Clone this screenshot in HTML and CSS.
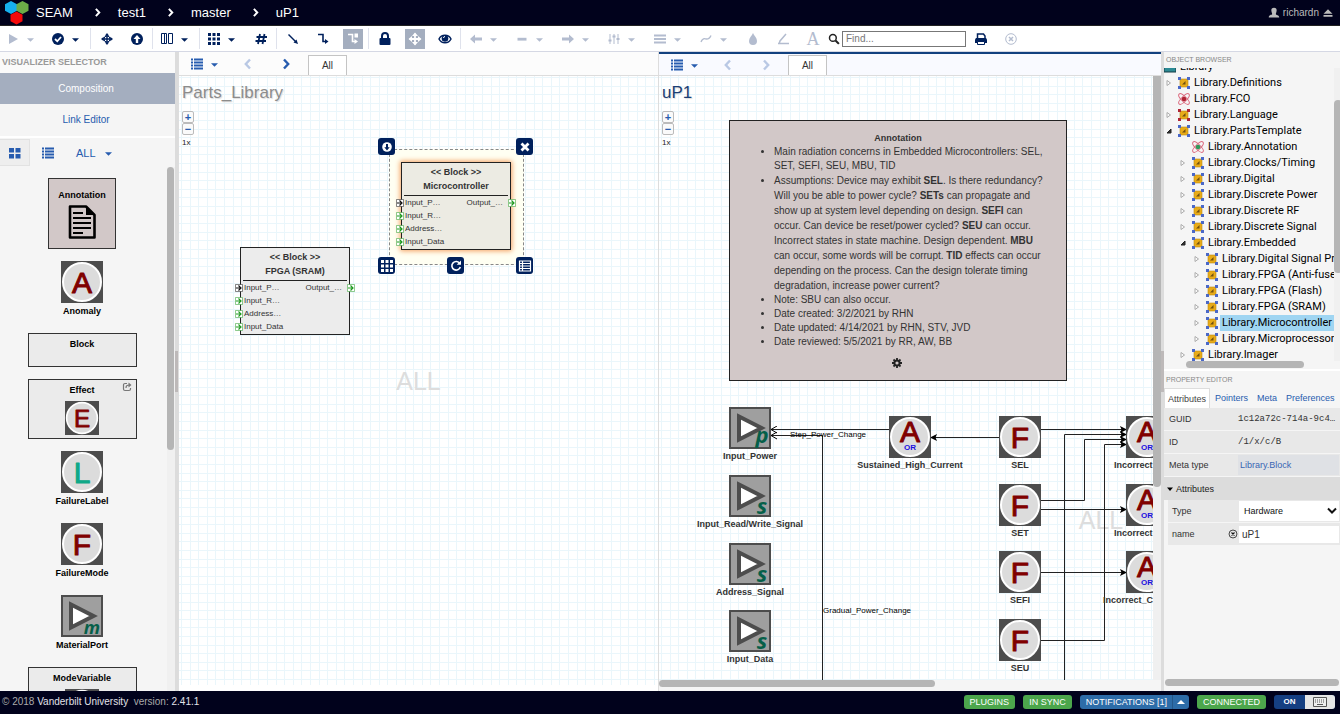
FILE: index.html
```html
<!DOCTYPE html>
<html lang="en">
<head>
<meta charset="utf-8">
<title>SEAM</title>
<link rel="stylesheet" href="styles.css">
</head>
<body>
<svg class="defs" aria-hidden="true">
  <symbol id="caret" viewBox="0 0 8 16"><path d="M0 7h8l-4 4z" fill="currentColor"/></symbol>
  <symbol id="play" viewBox="0 0 16 16"><path d="M4 3l9 5-9 5z" fill="currentColor"/></symbol>
  <symbol id="check" viewBox="0 0 16 16"><circle cx="8" cy="8" r="6" fill="currentColor"/><path d="M5 8l2.3 2.3L11 6" fill="none" stroke="#fff" stroke-width="1.8"/></symbol>
  <symbol id="target" viewBox="0 0 16 16"><path d="M8 2l2.200 2.800H8.700v2.500h2.500V5.800L14 8l-2.800 2.200V8.700H8.700v2.500h1.500L8 14l-2.200-2.800h1.500V8.700H4.800v1.500L2 8l2.800-2.200v1.500h2.500V4.800H5.800z" fill="currentColor"/><circle cx="8" cy="8" r="3" fill="none" stroke="currentColor"/></symbol>
  <symbol id="up" viewBox="0 0 16 16"><circle cx="8" cy="8" r="6" fill="currentColor"/><path d="M8 4l3.500 4H9.200v4H6.800V8H4.500z" fill="#fff"/></symbol>
  <symbol id="columns" viewBox="0 0 16 16"><path d="M2.500 2.500h5v10h-5zM9.500 2.500h4v10h-4zM5.500 2.500v10" fill="none" stroke="currentColor"/></symbol>
  <symbol id="grid" viewBox="0 0 16 16"><path d="M2 2h3v3H2zM6.500 2h3v3h-3zM11 2h3v3h-3zM2 6.500h3v3H2zM6.500 6.500h3v3h-3zM11 6.500h3v3h-3zM2 11h3v3H2zM6.500 11h3v3h-3zM11 11h3v3h-3z" fill="currentColor"/></symbol>
  <symbol id="hash" viewBox="0 0 16 16"><path d="M7 3L5 13M11.500 3l-2 10M3.500 6H14M2.500 10H13" fill="none" stroke="currentColor" stroke-width="1.800"/></symbol>
  <symbol id="diag" viewBox="0 0 16 16"><path d="M3.500 3.500l7 7" stroke="currentColor" stroke-width="1.400"/><path d="M13 13L8.500 11.500l3-3z" fill="currentColor"/></symbol>
  <symbol id="step" viewBox="0 0 16 16"><path d="M3 3.500h5v7h3" fill="none" stroke="currentColor" stroke-width="1.600"/><path d="M13.500 10.500L10 8v5z" fill="currentColor"/></symbol>
  <symbol id="stepbox" viewBox="0 0 16 16"><path d="M3 3.500h4.500v7H11" fill="none" stroke="currentColor" stroke-width="1.600"/><path d="M13 10.500L9.500 8v5zM9.500 2.500H13v4H9.500z" fill="currentColor"/></symbol>
  <symbol id="lock" viewBox="0 0 16 16"><rect x="2.500" y="7" width="11" height="7" rx="1" fill="currentColor"/><path d="M5 8V5a3 3 0 016 0v3" fill="none" stroke="currentColor" stroke-width="2"/></symbol>
  <symbol id="move" viewBox="0 0 16 16"><path d="M8 2.500v11M2.500 8h11" stroke="currentColor" stroke-width="1.800"/><path d="M8 1.500L11 5H5zM8 14.500L11 11H5zM1.500 8L5 5v6zM14.500 8L11 5v6z" fill="currentColor"/></symbol>
  <symbol id="eye" viewBox="0 0 16 16"><path d="M2 8c2.500-5 9.500-5 12 0-2.500 5-9.500 5-12 0z" fill="none" stroke="currentColor" stroke-width="1.500"/><circle cx="8" cy="7.500" r="3.300" fill="currentColor"/><path d="M6.500 7a1.500 1.500 0 011.500-1.500" fill="none" stroke="#fff"/></symbol>
  <symbol id="left" viewBox="0 0 16 16"><path d="M2 8l5-4.500v3h7v3H7v3z" fill="currentColor"/></symbol>
  <symbol id="right" viewBox="0 0 16 16"><path d="M14 8L9 3.500v3H2v3h7v3z" fill="currentColor"/></symbol>
  <symbol id="minus" viewBox="0 0 16 16"><path d="M3.500 6.800h9v2.800h-9z" fill="currentColor"/></symbol>
  <symbol id="sliders" viewBox="0 0 16 16"><path d="M4 3v10M8 3v10M12 3v10" stroke="currentColor"/><path d="M2.500 9.500h3M6.500 5.500h3M10.500 8h3" stroke="currentColor" stroke-width="2"/></symbol>
  <symbol id="lines" viewBox="0 0 16 16"><path d="M2 4.500h12M2 8h12M2 11.500h12" stroke="currentColor" stroke-width="1.800"/></symbol>
  <symbol id="curve" viewBox="0 0 16 16"><path d="M3 11c2-5 4-3 5.500-3S12 7 13 4.500" fill="none" stroke="currentColor" stroke-width="1.300"/></symbol>
  <symbol id="drop" viewBox="0 0 16 16"><path d="M8 2c1 2.500 4 5 4 8a4 4 0 01-8 0c0-3 3-5.500 4-8z" fill="currentColor"/></symbol>
  <symbol id="pen" viewBox="0 0 16 16"><path d="M11 3l-6 7-1 3M3 12.500h11" fill="none" stroke="currentColor" stroke-width="1.500"/></symbol>
  <symbol id="search" viewBox="0 0 16 16"><circle cx="6.500" cy="6.500" r="4.500" fill="none" stroke="currentColor" stroke-width="2"/><path d="M10 10l4.500 4.500" stroke="currentColor" stroke-width="2.800"/></symbol>
  <symbol id="print" viewBox="0 0 16 16"><path d="M4.500 8V3h6l1.500 2v3" fill="none" stroke="currentColor" stroke-width="1.500"/><path d="M2 8.500L3 7h10l1 1.500V12H2z" fill="currentColor"/><path d="M4.500 10.500h7v3h-7z" fill="#fff" stroke="currentColor"/></symbol>
  <symbol id="xcircle" viewBox="0 0 16 16"><circle cx="8" cy="8" r="5.300" fill="none" stroke="currentColor"/><path d="M6 6l4 4M10 6l-4 4" stroke="currentColor" stroke-width="1.500"/></symbol>
  <symbol id="list" viewBox="0 0 16 16"><path d="M2 3.500h2M5 3.500h9M2 6.500h2M5 6.500h9M2 9.500h2M5 9.500h9M2 12.500h2M5 12.500h9" stroke="currentColor" stroke-width="2"/></symbol>
  <symbol id="tiles" viewBox="0 0 16 16"><path d="M2 3h5v4.500H2zM8.500 3h5v4.500h-5zM2 9h5v4.500H2zM8.500 9h5v4.500h-5z" fill="currentColor"/></symbol>
  <symbol id="chevl" viewBox="0 0 16 16"><path d="M10 3.500L5.800 8l4.200 4.500" fill="none" stroke="currentColor" stroke-width="2.400"/></symbol>
  <symbol id="chevr" viewBox="0 0 16 16"><path d="M6 3.500L10.200 8 6 12.500" fill="none" stroke="currentColor" stroke-width="2.400"/></symbol>
  <symbol id="user" viewBox="0 0 16 16"><path d="M8 1c3 0 3.700 1.700 3.500 4C11.300 7.300 10.500 8 10.500 9.500c0 1 4.500 1 4.500 4.500H1c0-3.500 4.500-3.500 4.500-4.500C5.500 8 4.700 7.300 4.500 5 4.300 2.700 5 1 8 1z" fill="currentColor"/></symbol>
  <symbol id="eject" viewBox="0 0 16 16"><path d="M8 3l6 6H2zM2 10.500h12v2.500H2z" fill="currentColor"/></symbol>
  <symbol id="down" viewBox="0 0 16 16"><circle cx="8" cy="8" r="4.800" fill="#fff"/><path d="M8 11.500L5.300 8.300H7V5h2v3.300h1.700z" fill="#00205c"/></symbol>
  <symbol id="times" viewBox="0 0 16 16"><path d="M4.500 4.500l7 7M11.500 4.500l-7 7" stroke="currentColor" stroke-width="2.800"/></symbol>
  <symbol id="rotate" viewBox="0 0 16 16"><path d="M11.800 5.500A4.300 4.300 0 1012.300 9" fill="none" stroke="currentColor" stroke-width="1.600"/><path d="M13 2.500v4.300H8.700z" fill="currentColor"/></symbol>
  <symbol id="table" viewBox="0 0 16 16"><path d="M2.500 3h11v10h-11zM2.500 5.500h11M2.500 8h11M2.500 10.500h11M5.500 3v10" fill="none" stroke="currentColor" stroke-width="1.200"/></symbol>
  <symbol id="port" viewBox="0 0 8 8"><path d="M.5.5h7v7h-7z" fill="#fff" stroke="currentColor" stroke-opacity=".5"/><path d="M1 4h5M3.500 1.500L6 4 3.500 6.500" fill="none" stroke="currentColor" stroke-width="1.200"/></symbol>
  <symbol id="disc" viewBox="0 0 42 42"><path d="M0 0h42v42H0z" fill="#4d4d4d"/><circle cx="21" cy="21" r="19" fill="#dcdcdc" stroke="#fff" stroke-width="2"/></symbol>
  <symbol id="n-a" viewBox="0 0 42 42"><use href="#disc"/><text class="glyph red" x="21" y="32">A</text></symbol>
  <symbol id="n-f" viewBox="0 0 42 42"><use href="#disc"/><text class="glyph red" x="21" y="32">F</text></symbol>
  <symbol id="n-e" viewBox="0 0 42 42"><use href="#disc"/><text class="glyph red" x="21" y="32">E</text></symbol>
  <symbol id="n-l" viewBox="0 0 42 42"><use href="#disc"/><text class="glyph teal" x="21" y="32">L</text></symbol>
  <symbol id="n-or" viewBox="0 0 42 42"><use href="#disc"/><text class="glyph red" x="21" y="26">A</text><text class="or" x="21" y="34">OR</text></symbol>
  <symbol id="tri" viewBox="0 0 42 42"><path d="M1 1h40v40H1z" fill="#9f9f9f" stroke="#4d4d4d" stroke-width="2"/><path d="M10 9.500v23L32.500 21z" fill="#fff" stroke="#4d4d4d" stroke-width="4"/></symbol>
  <symbol id="n-p" viewBox="0 0 42 42"><use href="#tri"/><text class="kind" x="33" y="36">p</text></symbol>
  <symbol id="n-s" viewBox="0 0 42 42"><use href="#tri"/><text class="kind" x="33" y="39">s</text></symbol>
  <symbol id="n-m" viewBox="0 0 42 42"><use href="#tri"/><text class="kind m" x="31" y="39">m</text></symbol>
  <symbol id="doc" viewBox="0 0 28 34"><path d="M2 1.500h16L26.500 10v22.500H2z" fill="none" stroke="#000" stroke-width="2.600" stroke-linejoin="round"/><path d="M18 1v9h9z"/><path d="M5 8h10M5 13h18M5 18h18M5 23h18M5 28h10" stroke="#000" stroke-width="2.200"/></symbol>
  <symbol id="share" viewBox="0 0 10 10"><path d="M5 1.500H3A1.500 1.500 0 001.500 3v4A1.500 1.500 0 003 8.500h4A1.500 1.500 0 008.500 7V6M4 6c0-2 1-3 3.500-3" fill="none" stroke="#777" stroke-width="1.200"/><path d="M6.500.5L9.500 3l-3 2.500z" fill="#777"/></symbol>
  <symbol id="gear" viewBox="0 0 10 10"><circle cx="5" cy="5" r="2.600" fill="none" stroke="#222" stroke-width="2"/><path d="M5 0v2M5 8v2M0 5h2M8 5h2M1.500 1.500l1.300 1.300M7.200 7.200l1.300 1.300M8.500 1.500L7.200 2.800M2.800 7.200L1.500 8.500" stroke="#222" stroke-width="1.800"/></symbol>
  <symbol id="model" viewBox="0 0 12 12"><path d="M2 2l8 8M10 2l-8 8" stroke="#666"/><path d="M2 2h8v8H2z" fill="#e8ab18" stroke="#b98a1a" stroke-width=".6"/><path d="M4 7.500L7.500 4v3.500z" fill="#705010"/><path d="M0 0h3v3H0zM9 0h3v3H9zM0 9h3v3H0zM9 9h3v3H9z" fill="currentColor"/></symbol>
  <symbol id="atom" viewBox="0 0 12 12"><g fill="none" stroke="#dc6c80"><ellipse cx="6" cy="6" rx="7" ry="2.500" transform="rotate(45 6 6)"/><ellipse cx="6" cy="6" rx="7" ry="2.500" transform="rotate(-45 6 6)"/></g><circle cx="6" cy="6" r="2.300" fill="currentColor"/></symbol>
  <symbol id="twist" viewBox="0 0 8 8"><path d="M2 1.500L5.500 4 2 6.500z" fill="#fff" stroke="#aaa"/></symbol>
  <symbol id="open" viewBox="0 0 8 8"><path d="M6 2v4H2z" fill="#333" stroke="#222"/></symbol>
  <symbol id="keys" viewBox="0 0 14 10"><path d="M.5.5h13v9H.5z" fill="#eee" stroke="#555"/><path d="M2 3h10M2 5h10" stroke="#555" stroke-dasharray="1 1"/><path d="M4 7.500h6" stroke="#555"/></symbol>
</svg>

<header class="topbar">
  <svg class="logo" viewBox="0 0 26 24"><path d="M10 0l6 3.200v6.600L10 13 4 9.800V3.200z" fill="#16b0f0"/><path d="M21.500 0l6 3.200v6.600l-6 3.200-6-3.200V3.200z" fill="#6cac48"/><path d="M15.500 10.500l6 3.200v6.600l-6 3.200-6-3.200v-6.600z" fill="#f50a0a"/></svg>
  <nav class="crumbs"><a href="#">SEAM</a><svg class="ic sep"><use href="#chevr"/></svg><a href="#">test1</a><svg class="ic sep"><use href="#chevr"/></svg><a href="#">master</a><svg class="ic sep"><use href="#chevr"/></svg><a href="#">uP1</a></nav>
  <a class="user" href="#"><svg class="ic12"><use href="#user"/></svg>richardn<svg class="ic12"><use href="#eject"/></svg></a>
</header>

<div class="toolbar">
  <button class="split off" aria-label="Run"><svg class="ic"><use href="#play"/></svg><svg class="car"><use href="#caret"/></svg></button>
  <button class="split" aria-label="Validate"><svg class="ic"><use href="#check"/></svg><svg class="car"><use href="#caret"/></svg></button>
  <i class="bar"></i>
  <button class="tool" aria-label="Center"><svg class="ic"><use href="#target"/></svg></button>
  <button class="tool" aria-label="Up"><svg class="ic"><use href="#up"/></svg></button>
  <i class="bar"></i>
  <button class="split" aria-label="Panels"><svg class="ic"><use href="#columns"/></svg><svg class="car"><use href="#caret"/></svg></button>
  <i class="bar"></i>
  <button class="split" aria-label="Arrange"><svg class="ic"><use href="#grid"/></svg><svg class="car"><use href="#caret"/></svg></button>
  <button class="tool" aria-label="Grid"><svg class="ic"><use href="#hash"/></svg></button>
  <i class="bar"></i>
  <button class="tool" aria-label="Straight"><svg class="ic"><use href="#diag"/></svg></button>
  <button class="tool" aria-label="Elbow"><svg class="ic"><use href="#step"/></svg></button>
  <button class="tool" aria-label="Avoid"><svg class="ic on"><use href="#stepbox"/></svg></button>
  <i class="bar"></i>
  <button class="tool" aria-label="Lock"><svg class="ic"><use href="#lock"/></svg></button>
  <button class="tool" aria-label="Move"><svg class="ic on"><use href="#move"/></svg></button>
  <button class="tool" aria-label="View"><svg class="ic"><use href="#eye"/></svg></button>
  <i class="bar"></i>
  <button class="split line off" aria-label="Line start"><svg class="ic"><use href="#left"/></svg><svg class="car"><use href="#caret"/></svg></button>
  <button class="split line off" aria-label="Pattern"><svg class="ic"><use href="#minus"/></svg><svg class="car"><use href="#caret"/></svg></button>
  <button class="split line off" aria-label="Line end"><svg class="ic"><use href="#right"/></svg><svg class="car"><use href="#caret"/></svg></button>
  <button class="split line off" aria-label="Adjust"><svg class="ic"><use href="#sliders"/></svg><svg class="car"><use href="#caret"/></svg></button>
  <button class="split line off" aria-label="Width"><svg class="ic"><use href="#lines"/></svg><svg class="car"><use href="#caret"/></svg></button>
  <button class="split line off" aria-label="Curve"><svg class="ic"><use href="#curve"/></svg><svg class="car"><use href="#caret"/></svg></button>
  <button class="tool off" aria-label="Fill"><svg class="ic"><use href="#drop"/></svg></button>
  <button class="tool off" aria-label="Border"><svg class="ic"><use href="#pen"/></svg></button>
  <button class="tool off serif">A</button>
  <label class="find"><svg class="ic12"><use href="#search"/></svg><input type="text" placeholder="Find..." aria-label="Find"></label>
  <button class="tool" aria-label="Print"><svg class="ic"><use href="#print"/></svg></button>
  <button class="tool off" aria-label="Clear"><svg class="ic"><use href="#xcircle"/></svg></button>
</div>

<main class="main">
  <aside class="side">
    <h2 class="side-title">VISUALIZER SELECTOR</h2>
    <button class="vis active">Composition</button>
    <button class="vis">Link Editor</button>
    <div class="filter">
      <button class="view picked" aria-label="Tiles"><svg class="ic"><use href="#tiles"/></svg></button>
      <button class="view" aria-label="List"><svg class="ic"><use href="#list"/></svg></button>
      <button class="all">ALL<svg class="car"><use href="#caret"/></svg></button>
    </div>
    <div class="palette">
      <div class="parts">
        <div class="part note"><span>Annotation</span><svg class="docicon"><use href="#doc"/></svg></div>
        <div class="part"><svg class="big"><use href="#n-a"/></svg><span>Anomaly</span></div>
        <div class="part box">Block</div>
        <div class="part box tall">Effect<svg class="share"><use href="#share"/></svg><svg class="mid"><use href="#n-e"/></svg></div>
        <div class="part"><svg class="big"><use href="#n-l"/></svg><span>FailureLabel</span></div>
        <div class="part"><svg class="big"><use href="#n-f"/></svg><span>FailureMode</span></div>
        <div class="part"><svg class="big"><use href="#n-m"/></svg><span>MaterialPort</span></div>
        <div class="part box tall">ModeVariable<svg class="mid"><use href="#disc"/></svg></div>
      </div>
      <div class="track"><div class="thumb palette-thumb"></div></div>
    </div>
  </aside>
  <div class="gutter"><div class="grip"></div></div>

  <section class="pane first">
    <div class="tabs">
      <button class="menu" aria-label="Views"><svg class="ic"><use href="#list"/></svg><svg class="car"><use href="#caret"/></svg></button>
      <button class="nav dim" aria-label="Back"><svg class="ic"><use href="#chevl"/></svg></button>
      <button class="nav" aria-label="Forward"><svg class="ic"><use href="#chevr"/></svg></button>
      <button class="tab">All</button>
    </div>
    <div class="canvas">
      <h1 class="name">Parts_Library</h1>
      <div class="zoom"><button>+</button><button>−</button><span>1x</span></div>
      <div class="mark mark-a">ALL</div>
      <div class="block fpga">
        <b>&lt;&lt; Block &gt;&gt;</b><b>FPGA (SRAM)</b><hr>
        <div class="row"><svg class="pt blk"><use href="#port"/></svg>Input_P…<span class="out">Output_…</span><svg class="pt"><use href="#port"/></svg></div>
        <div class="row"><svg class="pt"><use href="#port"/></svg>Input_R…</div>
        <div class="row"><svg class="pt"><use href="#port"/></svg>Address…</div>
        <div class="row"><svg class="pt"><use href="#port"/></svg>Input_Data</div>
      </div>
      <div class="selection">
        <div class="block micro">
          <b>&lt;&lt; Block &gt;&gt;</b><b>Microcontroller</b><hr>
          <div class="row"><svg class="pt blk"><use href="#port"/></svg>Input_P…<span class="out">Output_…</span><svg class="pt"><use href="#port"/></svg></div>
          <div class="row"><svg class="pt"><use href="#port"/></svg>Input_R…</div>
          <div class="row"><svg class="pt"><use href="#port"/></svg>Address…</div>
          <div class="row"><svg class="pt"><use href="#port"/></svg>Input_Data</div>
        </div>
        <button class="handle nw" aria-label="Open"><svg class="ic"><use href="#down"/></svg></button>
        <button class="handle ne" aria-label="Delete"><svg class="ic"><use href="#times"/></svg></button>
        <button class="handle sw" aria-label="Ports"><svg class="ic"><use href="#grid"/></svg></button>
        <button class="handle s" aria-label="Rotate"><svg class="ic"><use href="#rotate"/></svg></button>
        <button class="handle se" aria-label="Properties"><svg class="ic"><use href="#table"/></svg></button>
      </div>
    </div>
  </section>

  <section class="pane second">
    <div class="tabs">
      <button class="menu" aria-label="Views"><svg class="ic"><use href="#list"/></svg><svg class="car"><use href="#caret"/></svg></button>
      <button class="nav dim" aria-label="Back"><svg class="ic"><use href="#chevl"/></svg></button>
      <button class="nav dim" aria-label="Forward"><svg class="ic"><use href="#chevr"/></svg></button>
      <button class="tab">All</button>
    </div>
    <div class="scroller">
      <div class="canvas">
        <h1 class="name blue">uP1</h1>
        <div class="zoom"><button>+</button><button>−</button><span>1x</span></div>
        <div class="mark mark-b">ALL</div>
        <svg class="wires">
          <defs>
            <marker id="head" markerWidth="8" markerHeight="8" refX="6" refY="4" orient="auto" markerUnits="userSpaceOnUse"><path d="M0 0.500L7 4 0 7.500 1.500 4z"/></marker>
            <marker id="vee" markerWidth="8" markerHeight="8" refX="7" refY="4" orient="auto" markerUnits="userSpaceOnUse"><path d="M1 .5L7 4 1 7.500" fill="none" stroke="#000"/></marker>
          </defs>
          <g class="wire">
            <path marker-end="url(#vee)" d="M230 353.500H112"/>
            <path marker-end="url(#vee)" d="M163.500 604V359.500H112"/>
            <path marker-end="url(#head)" d="M340 361.500H272"/>
            <path marker-end="url(#head)" d="M382 353.500H467"/>
            <path marker-end="url(#head)" d="M405.500 604V358.500H467"/>
            <path marker-end="url(#head)" d="M382 424.500H425.500V363.500H467"/>
            <path marker-end="url(#head)" d="M382 433.500H467"/>
            <path marker-end="url(#head)" d="M382 496.500H467"/>
            <path marker-end="url(#head)" d="M382 564.500H445.500V368.500H467"/>
          </g>
          <text x="131" y="361">Step_Power_Change</text>
          <text x="164" y="537">Gradual_Power_Change</text>
        </svg>
        <div class="annotation">
          <b>Annotation</b>
          <ul>
            <li>Main radiation concerns in Embedded Microcontrollers: SEL, SET, SEFI, SEU, MBU, TID</li>
            <li class="long">Assumptions: Device may exhibit <b>SEL</b>. Is there redundancy? Will you be able to power cycle? <b>SETs</b> can propagate and show up at system level depending on design. <b>SEFI</b> can occur. Can device be reset/power cycled? <b>SEU</b> can occur. Incorrect states in state machine. Design dependent. <b>MBU</b> can occur, some words will be corrupt. <b>TID</b> effects can occur depending on the process. Can the design tolerate timing degradation, increase power current?</li>
            <li>Note: SBU can also occur.</li>
            <li>Date created: 3/2/2021 by RHN</li>
            <li>Date updated: 4/14/2021 by RHN, STV, JVD</li>
            <li>Date reviewed: 5/5/2021 by RR, AW, BB</li>
          </ul>
          <svg class="gear"><use href="#gear"/></svg>
        </div>
        <div class="node c1 r1"><svg class="big"><use href="#n-p"/></svg>Input_Power</div>
        <div class="node c1 r2"><svg class="big"><use href="#n-s"/></svg>Input_Read/Write_Signal</div>
        <div class="node c1 r3"><svg class="big"><use href="#n-s"/></svg>Address_Signal</div>
        <div class="node c1 r4"><svg class="big"><use href="#n-s"/></svg>Input_Data</div>
        <div class="node c2 q1"><svg class="big"><use href="#n-or"/></svg>Sustained_High_Current</div>
        <div class="node c3 q1"><svg class="big"><use href="#n-f"/></svg>SEL</div>
        <div class="node c3 q2"><svg class="big"><use href="#n-f"/></svg>SET</div>
        <div class="node c3 q3"><svg class="big"><use href="#n-f"/></svg>SEFI</div>
        <div class="node c3 q4"><svg class="big"><use href="#n-f"/></svg>SEU</div>
        <div class="node c4 q1"><svg class="big"><use href="#n-or"/></svg><span class="cut">Incorrect</span></div>
        <div class="node c4 q2"><svg class="big"><use href="#n-or"/></svg><span class="cut">Incorrect</span></div>
        <div class="node c4 q3"><svg class="big"><use href="#n-or"/></svg><span class="cut wide">Incorrect_C</span></div>
      </div>
      <div class="track"><div class="thumb canvas-vthumb"></div></div>
      <div class="track across"><div class="thumb canvas-hthumb"></div></div>
    </div>
  </section>
  <div class="gutter"><div class="grip"></div></div>

  <aside class="props">
    <h2 class="mini">OBJECT BROWSER</h2>
    <div class="browser">
      <ul class="tree">
        <li class="root"><svg class="folder" viewBox="0 0 12 12"><path d="M0 2h12v9H0z" fill="#2d8a94" stroke="#143c44"/></svg><span>Library</span></li>
        <li><svg class="tw"><use href="#twist"/></svg><svg class="kindi"><use href="#model"/></svg><span>Library.Definitions</span></li>
        <li><i class="tw"></i><svg class="kindi crimson"><use href="#atom"/></svg><span>Library.FCO</span></li>
        <li><svg class="tw"><use href="#twist"/></svg><svg class="kindi crimson"><use href="#model"/></svg><span>Library.Language</span></li>
        <li><svg class="tw"><use href="#open"/></svg><svg class="kindi"><use href="#model"/></svg><span>Library.PartsTemplate</span></li>
        <li class="l2"><i class="tw"></i><svg class="kindi green"><use href="#atom"/></svg><span>Library.Annotation</span></li>
        <li class="l2"><svg class="tw"><use href="#twist"/></svg><svg class="kindi"><use href="#model"/></svg><span>Library.Clocks/Timing</span></li>
        <li class="l2"><svg class="tw"><use href="#twist"/></svg><svg class="kindi"><use href="#model"/></svg><span>Library.Digital</span></li>
        <li class="l2"><svg class="tw"><use href="#twist"/></svg><svg class="kindi"><use href="#model"/></svg><span>Library.Discrete Power</span></li>
        <li class="l2"><svg class="tw"><use href="#twist"/></svg><svg class="kindi"><use href="#model"/></svg><span>Library.Discrete RF</span></li>
        <li class="l2"><svg class="tw"><use href="#twist"/></svg><svg class="kindi"><use href="#model"/></svg><span>Library.Discrete Signal</span></li>
        <li class="l2"><svg class="tw"><use href="#open"/></svg><svg class="kindi"><use href="#model"/></svg><span>Library.Embedded</span></li>
        <li class="l3"><svg class="tw"><use href="#twist"/></svg><svg class="kindi"><use href="#model"/></svg><span>Library.Digital Signal Pr</span></li>
        <li class="l3"><svg class="tw"><use href="#twist"/></svg><svg class="kindi"><use href="#model"/></svg><span>Library.FPGA (Anti-fuse</span></li>
        <li class="l3"><svg class="tw"><use href="#twist"/></svg><svg class="kindi"><use href="#model"/></svg><span>Library.FPGA (Flash)</span></li>
        <li class="l3"><svg class="tw"><use href="#twist"/></svg><svg class="kindi"><use href="#model"/></svg><span>Library.FPGA (SRAM)</span></li>
        <li class="l3"><svg class="tw"><use href="#twist"/></svg><svg class="kindi"><use href="#model"/></svg><span class="chosen">Library.Microcontroller</span></li>
        <li class="l3"><svg class="tw"><use href="#twist"/></svg><svg class="kindi"><use href="#model"/></svg><span>Library.Microprocessor</span></li>
        <li class="l2"><svg class="tw"><use href="#twist"/></svg><svg class="kindi"><use href="#model"/></svg><span>Library.Imager</span></li>
      </ul>
      <div class="track"><div class="thumb tree-vthumb"></div></div>
      <div class="track across"><div class="thumb tree-hthumb"></div></div>
    </div>
    <h2 class="mini editor">PROPERTY EDITOR</h2>
    <div class="ptabs"><button class="current">Attributes</button><button>Pointers</button><button>Meta</button><button>Preferences</button></div>
    <div class="prow"><span>GUID</span><span class="mono">1c12a72c-714a-9c4…</span></div>
    <div class="prow"><span>ID</span><span class="mono">/1/x/c/B</span></div>
    <div class="prow"><span>Meta type</span><a class="meta" href="#">Library.Block</a></div>
    <div class="pgroup"><svg class="fold" viewBox="0 0 6 6"><path d="M0 1.500h6l-3 3.500z"/></svg>Attributes</div>
    <div class="prow inset"><label for="type">Type</label><div class="picker"><select id="type"><option>Hardware</option></select><svg viewBox="0 0 10 8"><path d="M1 1.500l4 4 4-4" fill="none" stroke="#111" stroke-width="2"/></svg></div></div>
    <div class="prow inset"><label for="nm">name <svg class="reset"><use href="#xcircle"/></svg></label><input id="nm" type="text" value="uP1"></div>
    <div class="track across bottom"><div class="thumb"></div></div>
  </aside>
</main>

<footer class="foot">
  <span>© 2018 <b>Vanderbilt University</b>&nbsp; version: <b>2.41.1</b></span>
  <div class="status">
    <button class="pill">PLUGINS</button>
    <button class="pill">IN SYNC</button>
    <button class="pill notif"><span>NOTIFICATIONS [1]</span><svg class="upc" viewBox="0 0 8 8"><path d="M0 6h8L4 2z" fill="#fff"/></svg></button>
    <button class="pill">CONNECTED</button>
    <button class="switch"><span>ON</span><svg class="keys"><use href="#keys"/></svg></button>
  </div>
</footer>
</body>
</html>
```
FILE: styles.css
```css
* { box-sizing: border-box; }
body {
  margin: 0; height: 100vh; overflow: hidden;
  display: grid; grid-template-rows: 26px 26px minmax(0, 1fr) 23px;
  font: 10px/14px "Liberation Sans", Arial, sans-serif; color: #333; background: #fff;
}
button, input, select { font: inherit; color: inherit; margin: 0; padding: 0; border: 0; background: none; }
a { color: inherit; text-decoration: none; }
h1, h2, ul { margin: 0; padding: 0; font-weight: normal; }
svg { display: block; flex: none; }
.defs { display: none; }
.ic { width: 16px; height: 16px; }
.ic12 { width: 12px; height: 12px; }
.car { width: 7px; height: 14px; }

.topbar { display: flex; align-items: center; background: #01021c; color: #fff; border-bottom: 1px solid #222; padding-right: 6px; }
.logo { width: 28px; height: 24px; overflow: visible; }
.crumbs { display: flex; align-items: center; font-size: 13px; flex: 1; padding-left: 8px; }
.sep { width: 13px; height: 13px; margin: 0 14px 0 18px; }
.user { display: flex; align-items: center; gap: 3px; color: #bbb; }

.toolbar { display: flex; align-items: center; color: #00205c; border-bottom: 1px solid #d5d8e4; background: #fff; }
.toolbar button { display: flex; align-items: center; height: 24px; flex: none; }
.toolbar .off { color: #b3bccf; }
.split { width: 45px; padding-left: 5px; gap: 6px; }
.toolbar .line { width: 46px; padding-left: 6px; }
.tool { width: 30px; justify-content: center; }
.bar { width: 1px; height: 21px; margin-right: 1px; background: #dfe2ec; flex: none; }
.on { background: #a4aebf; color: #fff; outline: 2px solid #a4aebf; }
.toolbar .serif { font: 18px/20px "Liberation Serif", serif; }
.find { display: flex; align-items: center; gap: 2px; color: #222; }
.find input { width: 124px; height: 16px; border: 1px solid #777; padding: 0 3px; }
.find input::placeholder { color: #777; }

.main { display: flex; min-height: 0; }
.side { width: 175px; flex: none; display: flex; flex-direction: column; background: #f5f5f5; color: #275caf; }
.side-title { font-size: 9px; font-weight: bold; line-height: 21px; padding-left: 2px; color: #999; background: #fafafa; }
.vis { height: 31px; text-align: center; padding-right: 3px; }
.vis.active { background: #a4aebf; color: #fff; }
.filter { display: flex; align-items: center; height: 31px; margin-top: 1px; border-top: 2px solid #fff; }
.view { width: 30px; height: 27px; display: flex; align-items: center; justify-content: center; margin-right: 3px; }
.view.picked { background: #eee; border: 1px solid #e2e2e2; border-left: 0; }
.all { display: flex; align-items: center; gap: 9px; font-size: 11px; margin-left: 10px; }
.palette { display: flex; flex: 1; min-height: 0; overflow: hidden; }
.parts { flex: 1; display: flex; flex-direction: column; align-items: center; gap: 12px; padding: 11px 3px 0 0; font-size: 9px; font-weight: bold; color: #000; }
.part { height: 60px; flex: none; display: flex; flex-direction: column; align-items: center; gap: 1px; }
.note { width: 68px; height: 71px; background: #d2c8c8; border: 1px solid #333; padding-top: 9px; gap: 3px; }
.docicon { width: 28px; height: 34px; }
.big { width: 42px; height: 42px; }
.mid { width: 34px; height: 34px; }
.box { width: 109px; height: 34px; background: #ebebeb; border: 1px solid #333; padding-top: 3px; gap: 4px; }
.box.tall { height: 60px; position: relative; }
.share { position: absolute; right: 4px; top: 2px; width: 10px; height: 10px; }
.track { width: 8px; background: #f0f0f0; flex: none; }
.thumb { background: #b5b5b5; border-radius: 4px; height: 100%; }
.palette-thumb { height: 54%; width: 7px; }
.gutter { width: 3px; background: #dcdcdc; flex: none; display: flex; flex-direction: column; justify-content: center; }
.grip { height: 41px; background: #bdb9b9; }

.glyph { font: 30px "Liberation Sans", sans-serif; text-anchor: middle; stroke-width: 1; stroke-linejoin: round; }
.red { fill: #800000; stroke: #800000; }
.teal { fill: #10a888; stroke: #10a888; }
.or { font: bold 8px "Liberation Sans", sans-serif; fill: #1a10e0; text-anchor: middle; }
.kind { font: italic bold 22px "Noto Sans", sans-serif; fill: #065f49; text-anchor: middle; }
.kind.m { font-size: 18px; }

.pane { display: flex; flex-direction: column; min-width: 0; border-left: 1px solid #ddd; }
.first { flex: 480; }
.second { flex: 503; }
.tabs { display: flex; align-items: center; height: 24px; background: #fcfcfc; border-bottom: 1px solid #ddd; color: #275caf; flex: none; }
.second .tabs { background: #f9faff; border-top: 2px solid #12417f; }
.menu { display: flex; align-items: center; gap: 6px; width: 53px; padding-left: 10px; }
.nav { width: 38px; display: flex; justify-content: center; padding-right: 6px; }
.dim { color: #b9c8e4; }
.tab { width: 39px; align-self: stretch; margin-top: 3px; background: #fff; border: 1px solid #c4c4c4; border-bottom: 0; color: #333; }
.second .tab { margin-top: 1px; }
.canvas {
  flex: 1; position: relative; overflow: hidden; min-height: 0; min-width: 0; padding: 7px 0 0 3px; background-color: #fff;
  background-image:
    linear-gradient(90deg, #eaf6fb 1px, transparent 1px 9px, #eaf6fb 9px 10px, transparent 10px 17px, #eaf6fb 17px 18px, transparent 18px 26px, #eaf6fb 26px 27px, transparent 27px 34px, #eaf6fb 34px 35px, transparent 35px),
    linear-gradient(#eaf6fb 1px, transparent 1px 9px, #eaf6fb 9px 10px, transparent 10px 17px, #eaf6fb 17px 18px, transparent 18px 26px, #eaf6fb 26px 27px, transparent 27px 34px, #eaf6fb 34px 35px, transparent 35px);
  background-size: 43px 43px; background-position: 2px 1px;
}
.first .canvas { margin-bottom: 6px; }
.scroller { flex: 1; min-height: 0; display: grid; grid-template: minmax(0, 1fr) 11px / minmax(0, 1fr) 8px; }
.name { font-size: 17px; line-height: 20px; color: #8c8c8c; text-shadow: 1px 1px 1px #ddd; }
.name.blue { color: #1b3f75; }
.zoom { display: flex; flex-direction: column; align-items: flex-start; margin-top: 8px; font-size: 8px; color: #222; }
.zoom button { width: 12px; height: 12px; border: 1px solid #bbb; border-radius: 2px; background: #fafafa; color: #275caf; font: bold 11px/10px "Liberation Sans", sans-serif; }
.zoom span { line-height: 14px; margin-top: 1px; }
.mark { position: absolute; font-size: 25px; line-height: 28px; color: #ddd; transform: translate(-50%, -50%); }
.mark-a { left: 50%; top: 50%; }
.mark-b { left: 442px; top: 444px; }

.block { position: absolute; width: 110px; height: 88px; border: 1px solid #222; background: #ececec; padding-top: 2px; font-size: 8px; color: #333; }
.block b { display: block; text-align: center; font-size: 9px; line-height: 14px; }
.block hr { margin: 2px 2px 1px; border: 0; border-top: 1px solid #222; }
.fpga { left: 61px; top: 171px; }
.micro { left: 11px; top: 12px; background: #ecebe3; box-shadow: 0 0 5px 1px #f5a060; }
.row { display: flex; align-items: center; height: 13px; margin: 0 -6px; gap: 1px; line-height: 13px; }
.row:first-of-type { margin-top: -1px; }
.pt { width: 8px; height: 8px; color: #1f9a1f; }
.pt.blk { color: #111; }
.out { margin-left: auto; padding-right: 4px; }
.selection { position: absolute; left: 210px; top: 73px; width: 135px; height: 116px; background: #fffff2; border: 1px dashed #888; }
.handle { position: absolute; width: 17px; height: 17px; border-radius: 3px; background: #00205c; color: #fff; display: flex; align-items: center; justify-content: center; }
.nw { left: -12px; top: -12px; }
.ne { right: -10px; top: -12px; }
.sw { left: -12px; bottom: -10px; }
.s { left: 57px; bottom: -10px; }
.se { right: -10px; bottom: -10px; }

.wires { position: absolute; left: 0; top: 0; width: 100%; height: 100%; }
.wire { fill: none; stroke: #222; }
.wires text { font-size: 8px; fill: #000; }
.annotation { position: absolute; left: 70px; top: 44px; width: 338px; height: 261px; background: #d2c8c8; border: 1px solid #222; padding: 10px 20px 0 44px; }
.annotation > b { display: block; text-align: center; margin-right: 24px; font-size: 9px; }
.annotation ul { line-height: 14px; }
.annotation .long { line-height: 15px; }
.gear { width: 10px; height: 10px; margin: 9px 0 0 118px; }
.node { position: absolute; width: 42px; display: flex; flex-direction: column; align-items: center; white-space: nowrap; font-size: 9px; font-weight: bold; line-height: 15px; }
.c1 { left: 70px; } .c2 { left: 230px; } .c3 { left: 340px; } .c4 { left: 467px; }
.r1 { top: 331px; } .r2 { top: 399px; } .r3 { top: 467px; } .r4 { top: 534px; }
.q1 { top: 340px; } .q2 { top: 408px; } .q3 { top: 475px; } .q4 { top: 543px; }
.cut { align-self: flex-start; margin-left: -12px; }
.cut.wide { margin-left: -23px; }
.canvas-vthumb { height: 68%; border-radius: 0 0 4px 4px; }
.across { width: auto; grid-column: 1 / -1; background: #f5f5f5; }
.canvas-hthumb { width: 55%; height: 7px; }

.props { width: 176px; flex: none; display: flex; flex-direction: column; background: #f5f5f5; font-size: 9px; min-width: 0; }
.mini { font-size: 7px; line-height: 16px; padding-left: 2px; color: #888; }
.mini.editor { border-top: 2px solid #fff; line-height: 17px; }
.browser { height: 301px; display: grid; grid-template: minmax(0, 1fr) 8px / minmax(0, 1fr) 6px; }
.tree { overflow: hidden; list-style: none; font: 11px/16px Roboto, sans-serif; color: #000; }
.tree li { height: 16px; display: flex; align-items: center; white-space: nowrap; padding-left: 1px; }
.tree span { padding: 0 2px; }
.tree .root { margin-top: -9px; padding-left: 0; }
.tree .l2 { padding-left: 15px; }
.tree .l3 { padding-left: 29px; }
.tree .chosen { background: #9fd5f2; }
.tw { width: 8px; height: 8px; margin-right: 5px; flex: none; }
.kindi { width: 12px; height: 12px; margin-right: 2px; color: #4a68c8; }
.folder { width: 12px; height: 12px; margin-right: 2px; }
.crimson { color: #b02434; }
.green { color: #2f9a5a; }
.tree-vthumb { margin-top: 32px; height: 173px; }
.tree-hthumb { width: 118px; height: 7px; margin-left: 22px; }
.ptabs { display: flex; gap: 1px; height: 20px; color: #275caf; }
.ptabs button { padding: 0 4px; }
.ptabs .current { background: #fff; border: 1px solid #ddd; border-bottom: 0; color: #444; padding: 0 3px; }
.prow { display: flex; align-items: center; height: 23px; background: #e8e8e8; border-bottom: 1px solid #f5f5f5; padding-left: 5px; padding-right: 1px; }
.prow > :first-child { width: 69px; flex: none; }
.mono { font-family: "Liberation Mono", monospace; }
.meta { flex: 1; color: #3966b4; background: #dfe1e5; line-height: 20px; padding-left: 2px; }
.pgroup { display: flex; align-items: center; gap: 3px; height: 23px; background: #dcdcdc; padding-left: 3px; color: #222; }
.fold { width: 6px; height: 6px; }
.inset { margin-left: 4px; padding-left: 4px; }
.prow.inset > :first-child { width: 67px; display: flex; justify-content: space-between; align-items: center; }
.reset { width: 12px; height: 12px; color: #111; }
.prow input { flex: 1; min-width: 0; height: 17px; background: #fff; font-size: 10px; padding-left: 3px; }
.picker { position: relative; flex: 1; background: #fff; }
.picker select { appearance: none; width: 100%; height: 20px; padding-left: 5px; color: #111; }
.picker svg { position: absolute; right: 2px; top: 6px; width: 10px; height: 8px; pointer-events: none; }
.bottom { margin-top: auto; height: 12px; padding: 0 1px; }
.bottom .thumb { height: 7px; }

.foot { display: flex; align-items: center; justify-content: space-between; background: #01021c; color: #aaa; padding: 0 5px 2px 2px; }
.foot b { font-weight: normal; color: #e2e2ea; }
.status { display: flex; gap: 8px; }
.pill { height: 14px; padding: 0 6px; border-radius: 3px; background: #4ca64c; color: #fff; font-size: 9px; line-height: 14px; }
.notif { display: flex; align-items: center; background: #2d6ca8; padding-right: 4px; }
.notif span { padding-right: 5px; border-right: 1px solid #24578a; margin-right: 4px; }
.upc { width: 8px; height: 8px; }
.switch { display: flex; height: 14px; background: #153f82; color: #fff; font: bold 8px/14px "Liberation Sans", sans-serif; border-radius: 3px; overflow: hidden; }
.switch span { width: 31px; }
.keys { width: 30px; height: 14px; background: #e6e6e6; padding: 2px 8px; }
```
